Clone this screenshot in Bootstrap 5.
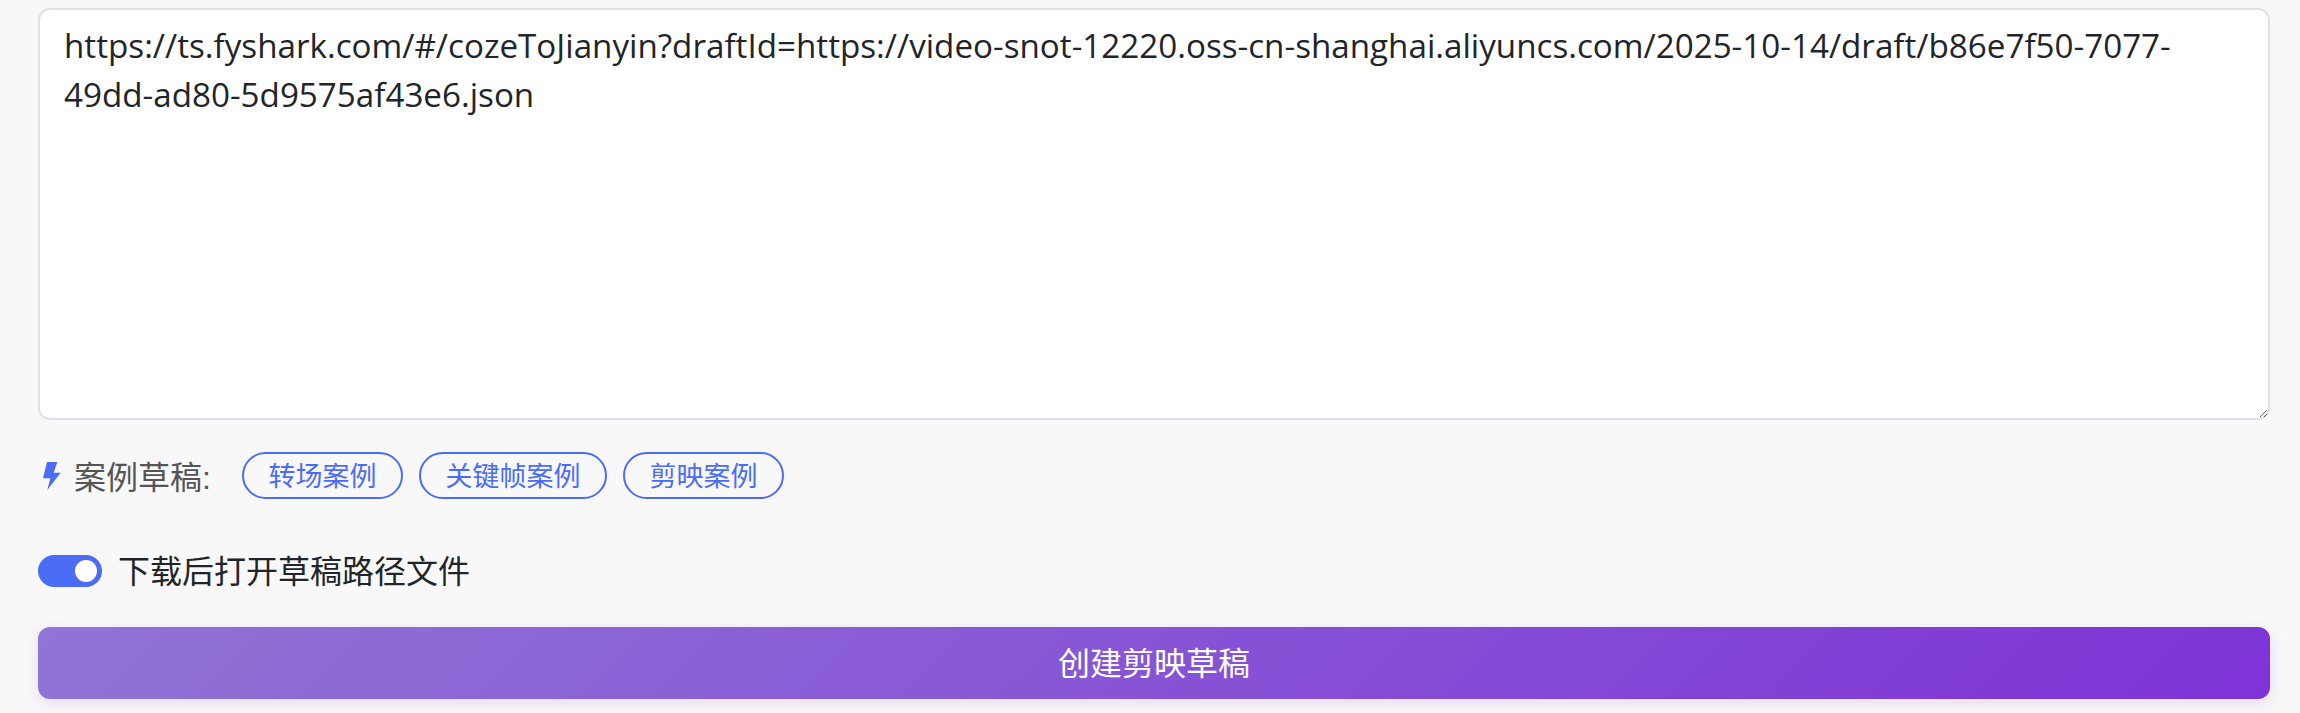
<!DOCTYPE html>
<html lang="zh"><head><meta charset="utf-8">
<link href="https://cdn.jsdelivr.net/npm/bootstrap@5.3.0/dist/css/bootstrap.min.css" rel="stylesheet">
<style>
html,body{height:713px;overflow:hidden;background:#f8f8f8}
body{font-family:"Liberation Sans","Noto Sans CJK SC",sans-serif;color:#222}
.pane{padding:8px 30px 0 38px}
.urlbox{height:412px;width:100%;border:2px solid #dee2e6;border-radius:12px;background:#fff;padding:11px 24px;font-size:33.2px;line-height:49px;font-family:"Open Sans","Noto Sans CJK SC",sans-serif;color:#212529;box-shadow:none}
.urlbox:focus{box-shadow:none;border-color:#dee2e6}
.caserow{margin-top:32px;height:47px}
.boltmark{margin-left:5px;flex:none}
.caselabel{font-size:32px;color:#555;margin-left:13px;margin-right:31px;padding-top:4px}
.casepill{border:2px solid #4a6cf7;color:#4a6cf7;border-radius:24px;background:transparent;font-size:27px;line-height:33px;padding:7px 24.5px 3px;height:47px;white-space:nowrap}
.togglerow{margin:56px 0 0;font-size:32px;color:#212529;height:32px;min-height:0}
.togglerow .form-check-label{padding-top:2px}
.togglerow .form-check-input{width:64px;height:32px;margin:0;background-color:#4a6cf7;border:0;background-image:url("data:image/svg+xml,%3csvg xmlns='http://www.w3.org/2000/svg' viewBox='-4 -4 8 8'%3e%3ccircle r='2.75' fill='%23fff'/%3e%3c/svg%3e")}
.gobtn{margin-top:40px;height:72px;width:100%;border:0;border-radius:12px;color:#fff;font-size:32px;padding-top:8px;background:linear-gradient(135deg,#9075d5,#7e33d6);box-shadow:0 4px 15px rgba(126,51,214,.15)}
</style></head><body>
<div class="pane">
<textarea class="form-control urlbox">https://ts.fyshark.com/#/cozeToJianyin?draftId=https://video-snot-12220.oss-cn-shanghai.aliyuncs.com/2025-10-14/draft/b86e7f50-7077-49dd-ad80-5d9575af43e6.json</textarea>
<div class="caserow d-flex align-items-center">
<svg class="boltmark" width="18" height="28" viewBox="0 0 18 28"><path fill="#4a6cf7" d="M4 0H14.3L10.7 10.7H17.7L4.3 28 7.3 16.3H0z"/></svg>
<span class="caselabel">案例草稿:</span>
<div class="d-flex gap-3"><button class="btn casepill">转场案例</button><button class="btn casepill">关键帧案例</button><button class="btn casepill">剪映案例</button></div>
</div>
<div class="togglerow form-check form-switch d-flex align-items-center p-0"><input class="form-check-input" type="checkbox" checked><label class="form-check-label ms-3">下载后打开草稿路径文件</label></div>
<button class="btn gobtn">创建剪映草稿</button>
</div>
</body></html>
